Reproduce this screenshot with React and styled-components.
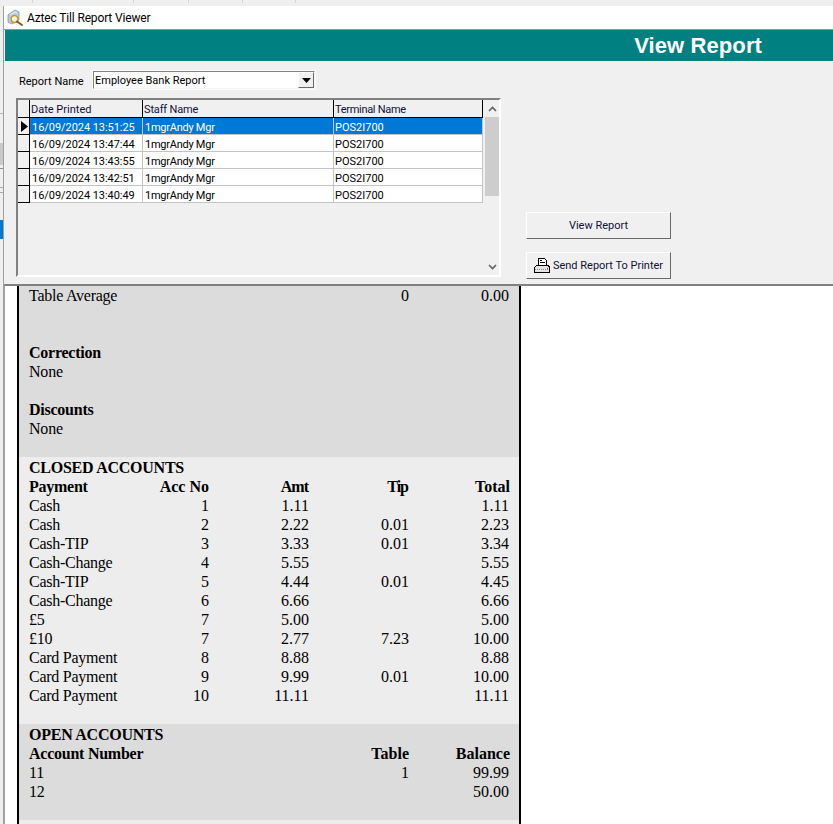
import React from "react";
import styled, { createGlobalStyle } from "styled-components";

const Global = createGlobalStyle`
  html, body { margin: 0; padding: 0; background: #fff; }
  #root { width: 833px; height: 824px; overflow: hidden; }
`;
const UI = `Roboto, "Liberation Sans", sans-serif`;

const Page = styled.div`width: 833px; height: 824px; overflow: hidden; display: flex; flex-direction: column; background: #f0f0f0;`;
const TopStrip = styled.div`height: 6px; flex: none; display: flex; background: #efefef;`;
const Tick = styled.i`width: 1px; height: 3px; background: #d4d4d4; margin-left: ${p => p.$gap}px;`;
const Main = styled.div`flex: 1; display: flex; min-height: 0;`;
const LeftEdge = styled.div`width: 3px; flex: none; border-right: 1px solid #a0a0a0; background: #efefef; display: flex; flex-direction: column;`;
const EdgeBand = styled.i`display: block; flex: none; height: ${p => p.$h}px; margin-top: ${p => p.$top}px; background: ${p => p.$c};`;
const Win = styled.div`flex: 1; min-width: 0; display: flex; flex-direction: column;`;
const TitleBar = styled.div`height: 23px; flex: none; background: #fff; border-bottom: 1px solid #8f9a98; display: flex; align-items: center; padding-left: 2px; gap: 3px; font: 12px/23px ${UI}; color: #000;`;
const TitleText = styled.span`padding-top: 2px; line-height: 21px; letter-spacing: -0.15px;`;
const Banner = styled.div`height: 31px; flex: none; background: #008080; border-left: 1px solid #f0f0f0; border-bottom: 1px solid #fff; display: flex; align-items: center; justify-content: flex-end; padding-right: 71px; color: #fff; font: bold 22px/31px "Liberation Sans", sans-serif; letter-spacing: 0.1px;`;
const Form = styled.div`height: 222px; flex: none; background: #f0f0f0; padding: 8px 0 0 12px; box-sizing: border-box; font: 11px/17px ${UI}; color: #000;`;
const PickRow = styled.div`display: flex; align-items: center; height: 20px; gap: 9px; padding-left: 3px;`;
const PickLabel = styled.span`width: 64px; white-space: nowrap; padding-top: 2px; line-height: 17px;`;
const Select = styled.div`width: 224px; height: 20px; box-sizing: border-box; background: #fff; border: 2px solid; border-color: #808080 #f4f4f4 #f4f4f4 #808080; outline: 1px solid #fbfbfb; outline-offset: -1px; display: flex; align-items: center; justify-content: space-between; padding-left: 1px;`;
const SelectText = styled.span`padding-top: 2px; line-height: 14px;`;
const SelectBtn = styled.div`width: 16px; height: 16px; box-sizing: border-box; background: #f0f0f0; border: 1px solid; border-color: #fff #696969 #696969 #fff; display: flex; align-items: center; justify-content: center;`;
const Body = styled.div`display: flex; margin-top: 8px;`;
const GridBox = styled.div`width: 485px; height: 179px; box-sizing: border-box; border: 2px solid; border-color: #808080 #fff #fff #808080; display: flex; background: #f0f0f0;`;
const Table = styled.div`width: 466px; flex: none;`;
const Line = styled.div`display: grid; grid-template-columns: 12px 113px 191px 149px; height: ${p => p.$h}px;`;
const RowHead = styled.div`border-right: 1px solid #000; border-bottom: 1px solid #000; display: flex; align-items: center; padding-left: 3px; box-sizing: border-box;`;
const HeadCell = styled.div`border-right: 1px solid #000; border-bottom: 1px solid #000; padding-left: 1px; line-height: 19px; white-space: nowrap; overflow: hidden; color: #10103a; font-size: 11px; letter-spacing: ${p => p.$track || 0}px;`;
const Cell = styled.div`padding-left: ${p => p.$pad ?? 2}px; white-space: nowrap; overflow: hidden; line-height: 19px; box-sizing: border-box; background: ${p => p.$sel ? "#0078d7" : "#fff"}; color: ${p => p.$sel ? "#fff" : "#000"}; border-right: 1px solid #c4c4c4; border-bottom: 1px solid #c4c4c4; font-size: 11px; letter-spacing: ${p => p.$track || 0}px;`;
const Scroll = styled.div`width: 15px; margin-left: 1px; display: flex; flex-direction: column; align-items: stretch;`;
const ScrollBtn = styled.div`height: 17px; flex: none; display: flex; align-items: center; justify-content: center;`;
const Thumb = styled.div`height: 79px; flex: none; background: #cdcdcd;`;
const ScrollGap = styled.div`flex: 1;`;
const Buttons = styled.div`display: flex; flex-direction: column; gap: 13px; margin-left: 25px; padding-top: 114px;`;
const Btn = styled.div`width: 145px; height: 27px; box-sizing: border-box; background: #f0f0f0; border: 1px solid; border-color: #fff #696969 #696969 #fff; display: flex; align-items: center; justify-content: center; gap: 2px; color: #10103a; font-size: 11px; line-height: 17px;`;
const Viewer = styled.div`flex: 1; min-height: 0; overflow: hidden; background: #fff; border-top: 2px solid #808080; border-left: 1px solid #a0a0a0; padding-left: 12px;`;
const Doc = styled.div`width: 500px; border-left: 2px solid #000; border-right: 2px solid #000; font: 16px/19px "Liberation Serif", "Times New Roman", serif; color: #000;`;
const Section = styled.div`background: ${p => p.$tone === "dark" ? "#dcdcdc" : "#ededed"}; padding: ${p => p.$top || 0}px 10px ${p => p.$bottom || 0}px 10px;`;
const Row = styled.div`display: grid; grid-template-columns: 81px 99px 100px 100px 101px; height: 19px; font-weight: ${p => p.$bold ? 700 : 400}; & > :last-child { padding-right: ${p => p.$bold ? 0 : 1}px; }`;
const Wide = styled.div`height: 19px; letter-spacing: ${p => p.$bold ? -0.25 : -0.2}px; font-weight: ${p => p.$bold ? 700 : 400};`;
const Txt = styled.span`white-space: nowrap; letter-spacing: -0.25px;`;
const Num = styled.span`text-align: right; white-space: nowrap;`;
const TightNum = styled(Num)`letter-spacing: -1px; padding-right: 1px;`;

const printed = ["13:51:25", "13:47:44", "13:43:55", "13:42:51", "13:40:49"];
const closed = [
  ["Cash", "1", "1.11", "", "1.11"],
  ["Cash", "2", "2.22", "0.01", "2.23"],
  ["Cash-TIP", "3", "3.33", "0.01", "3.34"],
  ["Cash-Change", "4", "5.55", "", "5.55"],
  ["Cash-TIP", "5", "4.44", "0.01", "4.45"],
  ["Cash-Change", "6", "6.66", "", "6.66"],
  ["£5", "7", "5.00", "", "5.00"],
  ["£10", "7", "2.77", "7.23", "10.00"],
  ["Card Payment", "8", "8.88", "", "8.88"],
  ["Card Payment", "9", "9.99", "0.01", "10.00"],
  ["Card Payment", "10", "11.11", "", "11.11"],
];
const DataRow = ({ c, bold }) => (
  <Row $bold={bold}>
    <Txt>{c[0]}</Txt><Num>{c[1]}</Num><Num>{c[2]}</Num><Num>{c[3]}</Num><Num>{c[4]}</Num>
  </Row>
);

const AppIcon = () => (
  <svg width="18" height="18" viewBox="0 0 18 18">
    <path d="M2 6 L9 1 L13 3 L13 11 L6 15 L2 13 Z" fill="#b9cdea" stroke="#7d93b8" strokeWidth=".8" />
    <path d="M4 6 L9 3 L11 4" fill="none" stroke="#eef3fb" strokeWidth="1" />
    <circle cx="8.5" cy="10" r="3.4" fill="#f4f4e6" stroke="#c99a1e" strokeWidth="1.5" />
    <path d="M11 12.5 L16 16" stroke="#8a5a12" strokeWidth="2" strokeLinecap="round" />
  </svg>
);
const PrinterIcon = () => (
  <svg width="17" height="17" viewBox="0 0 17 17" shapeRendering="crispEdges">
    <path d="M4.5 1.5 H10.5 L12.5 3.5 V8.5 H4.5 Z" fill="#fff" stroke="#000" />
    <path d="M6 3.5 H8 M6 5.5 H11" stroke="#000" />
    <path d="M2.5 8.5 H14.5 L15.5 10.5 V15.5 H0.5 V10.5 Z" fill="#e4e4e4" stroke="#000" />
    <path d="M1 12.5 H15" stroke="#8a8a8a" strokeDasharray="1 1" />
    <rect x="13" y="11" width="1" height="1" fill="#d02020" />
  </svg>
);
const Caret = () => (
  <svg width="9" height="5" viewBox="0 0 9 5"><path d="M0 0 H9 L4.5 5 Z" fill="#000" /></svg>
);
const Chevron = ({ up }) => (
  <svg width="9" height="6" viewBox="0 0 9 6">
    <path d={up ? "M1 5 L4.5 1.5 L8 5" : "M1 1 L4.5 4.5 L8 1"} fill="none" stroke="#606060" strokeWidth="1.6" />
  </svg>
);
const Pointer = () => (
  <svg width="7" height="11" viewBox="0 0 7 11"><path d="M0 0 L7 5.5 L0 11 Z" fill="#000" /></svg>
);

export default function App() {
  return (
    <Page>
      <Global />
      <TopStrip>
        <Tick $gap={32} /><Tick $gap={100} /><Tick $gap={54} /><Tick $gap={53} /><Tick $gap={52} />
      </TopStrip>
      <Main>
        <LeftEdge>
          <EdgeBand $top={107} $h={1} $c="#b4b4b4" />
          <EdgeBand $top={29} $h={22} $c="#c9c9c9" />
          <EdgeBand $top={3} $h={1} $c="#8c8c8c" />
          <EdgeBand $top={18} $h={1} $c="#a8a8a8" />
          <EdgeBand $top={4} $h={1} $c="#a8a8a8" />
          <EdgeBand $top={27} $h={19} $c="#0078d7" />
        </LeftEdge>
        <Win>
          <TitleBar><AppIcon /><TitleText>Aztec Till Report Viewer</TitleText></TitleBar>
          <Banner>View Report</Banner>
          <Form>
            <PickRow>
              <PickLabel>Report Name</PickLabel>
              <Select>
                <SelectText>Employee Bank Report</SelectText>
                <SelectBtn><Caret /></SelectBtn>
              </Select>
            </PickRow>
            <Body>
              <GridBox>
                <Table>
                  <Line $h={18}>
                    <RowHead />
                    <HeadCell>Date Printed</HeadCell>
                    <HeadCell $track={-0.15}>Staff Name</HeadCell>
                    <HeadCell $track={-0.3}>Terminal Name</HeadCell>
                  </Line>
                  {printed.map((t, i) => (
                    <Line $h={17} key={t}>
                      <RowHead>{i === 0 && <Pointer />}</RowHead>
                      <Cell $sel={i === 0} $track={-0.05}>16/09/2024 {t}</Cell>
                      <Cell $sel={i === 0} $track={-0.25}>1mgrAndy Mgr</Cell>
                      <Cell $sel={i === 0} $pad={1}>POS2I700</Cell>
                    </Line>
                  ))}
                </Table>
                <Scroll>
                  <ScrollBtn><Chevron up /></ScrollBtn>
                  <Thumb />
                  <ScrollGap />
                  <ScrollBtn><Chevron /></ScrollBtn>
                </Scroll>
              </GridBox>
              <Buttons>
                <Btn>View Report</Btn>
                <Btn><PrinterIcon /><span>Send Report To Printer</span></Btn>
              </Buttons>
            </Body>
          </Form>
          <Viewer>
            <Doc>
              <Section $tone="dark">
                <DataRow c={["Table Average", "", "", "0", "0.00"]} />
                <Wide /><Wide />
                <Wide $bold>Correction</Wide>
                <Wide>None</Wide>
                <Wide />
                <Wide $bold>Discounts</Wide>
                <Wide>None</Wide>
                <Wide />
              </Section>
              <Section $tone="light" $top={1} $bottom={19}>
                <Wide $bold>CLOSED ACCOUNTS</Wide>
                <Row $bold>
                  <Txt>Payment</Txt><Num>Acc No</Num><TightNum>Amt</TightNum><TightNum>Tip</TightNum><Num>Total</Num>
                </Row>
                {closed.map((c, i) => <DataRow key={i} c={c} />)}
              </Section>
              <Section $tone="dark" $top={1} $bottom={19}>
                <Wide $bold>OPEN ACCOUNTS</Wide>
                <DataRow bold c={["Account Number", "", "", "Table", "Balance"]} />
                <DataRow c={["11", "", "", "1", "99.99"]} />
                <DataRow c={["12", "", "", "", "50.00"]} />
              </Section>
              <Section $tone="light" $bottom={40} />
            </Doc>
          </Viewer>
        </Win>
      </Main>
    </Page>
  );
}
